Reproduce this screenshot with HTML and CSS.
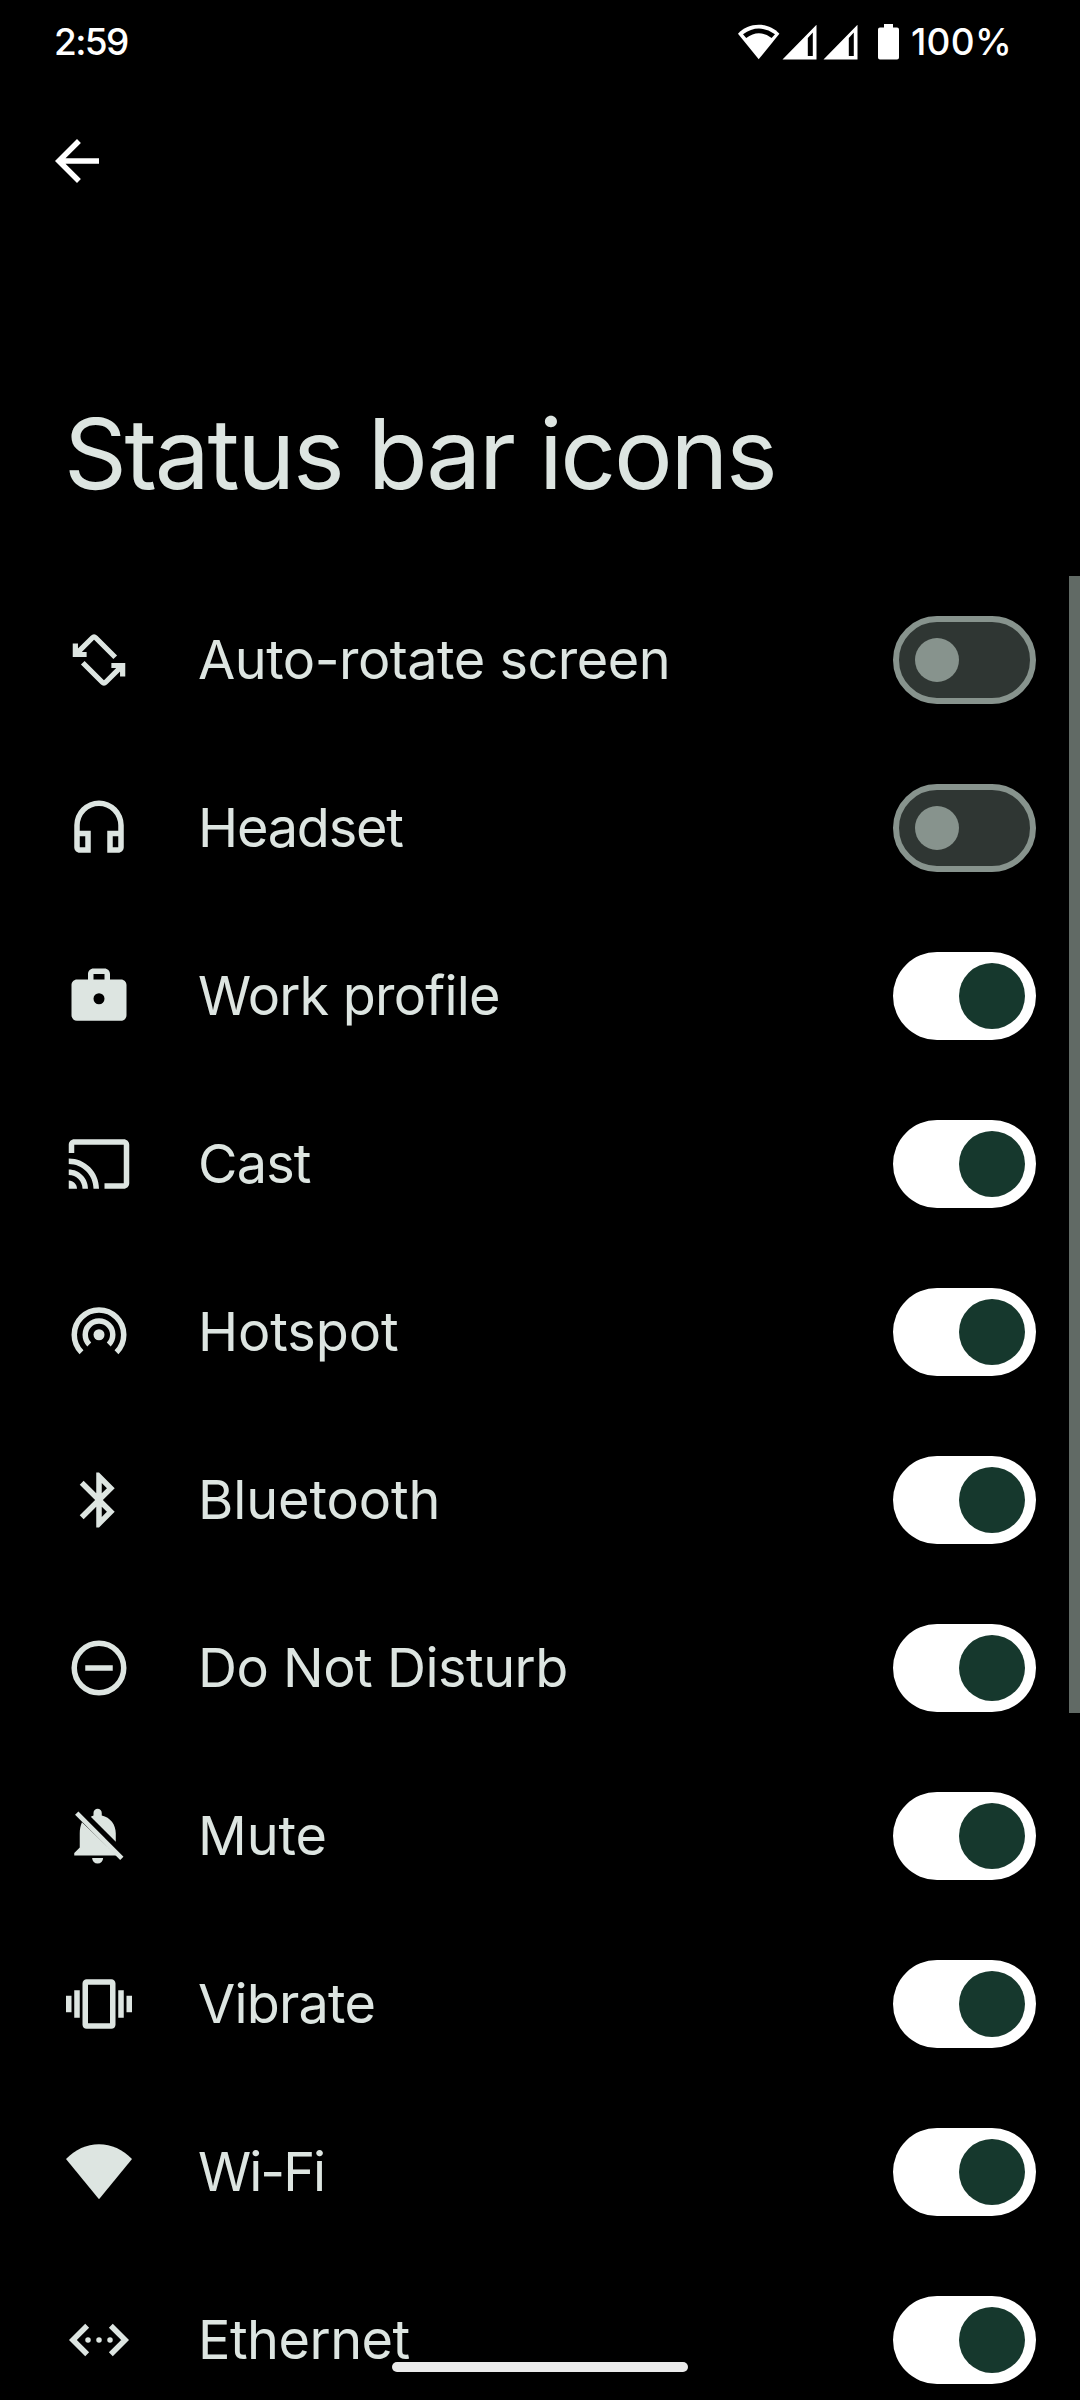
FILE: index.html
```html
<!DOCTYPE html>
<html lang="en">
<head>
    <meta charset="UTF-8">
    <meta name="viewport" content="width=device-width, initial-scale=1.0">
    <title>Status bar icons</title>
    <link rel="stylesheet" href="styles.css">
</head>
<body>
    <div class="status-bar">
        <span class="clock">2:59</span>
        <div class="status-icons">
            <svg class="status-wifi" viewBox="0 0 42 36">
                <path fill="#fff" d="M20.7 35.3L0 9.8C5.5 3.7 12.8.8 20.7.8S36 3.7 41.4 9.8z"/>
                <path fill="#000" d="M5 10.2Q20.9-1 37 10.2L33.6 14Q20.9 4.4 8.2 14z"/>
            </svg>
            <svg class="status-signal" viewBox="0 0 36 36">
                <path fill="#fff" fill-rule="evenodd" d="M.5 35.5h34V.8zM25.8 14l5-5.6v23.7h-5z"/>
            </svg>
            <svg class="status-signal" viewBox="0 0 36 36">
                <path fill="#fff" fill-rule="evenodd" d="M.5 35.5h34V.8zM25.8 14l5-5.6v23.7h-5z"/>
            </svg>
            <svg class="status-battery" viewBox="0 0 22 36">
                <path fill="#fff" d="M6 0h9v3.5h4a2 2 0 0 1 2 2v28a2 2 0 0 1-2 2H2a2 2 0 0 1-2-2v-28a2 2 0 0 1 2-2h4z"/>
            </svg>
            <span class="battery-level">100%</span>
        </div>
    </div>

    <header class="toolbar">
        <svg class="back" viewBox="0 0 24 24"><path d="M20 11H7.83l5.59-5.59L12 4l-8 8 8 8 1.41-1.41L7.83 13H20v-2z"/></svg>
        <h1>Status bar icons</h1>
    </header>

    <ul class="settings">
        <li class="row">
            <svg class="icon line" viewBox="0 0 24 24"><path d="M3.9 9.6l5.7-5.7q.6-.6 1.2 0L17.9 11M3.4 6v4h4.1M20.1 14.4l-5.7 5.7q-.6.6-1.2 0L6.1 13M20.6 18v-4h-4.1"/></svg>
            <span class="label">Auto-rotate screen</span>
            <span class="switch"></span>
        </li>
        <li class="row">
            <svg class="icon" viewBox="0 0 24 24"><path fill-rule="evenodd" d="M12 2a9 9 0 0 0-9 9v8c0 1.1.9 2 2 2h4v-8H5v-2a7 7 0 0 1 14 0v2h-4v8h4c1.1 0 2-.9 2-2v-8a9 9 0 0 0-9-9zM7 15v4H5v-4zM19 15v4h-2v-4z"/></svg>
            <span class="label tighter">Headset</span>
            <span class="switch"></span>
        </li>
        <li class="row">
            <svg class="icon" viewBox="0 0 24 24"><path fill-rule="evenodd" d="M20 6h-4V4c0-1.1-.9-2-2-2h-4c-1.1 0-2 .9-2 2v2H4c-1.1 0-2 .9-2 2v11c0 1.1.9 2 2 2h16c1.1 0 2-.9 2-2V8c0-1.1-.9-2-2-2zM10 4h4v2h-4zM12 15a2 2 0 1 1 0-4 2 2 0 0 1 0 4z"/></svg>
            <span class="label tight">Work profile</span>
            <span class="switch on"></span>
        </li>
        <li class="row">
            <svg class="icon" viewBox="0 0 24 24"><path d="M21 3H3c-1.1 0-2 .9-2 2v3h2V5h18v14h-7v2h7c1.1 0 2-.9 2-2V5c0-1.1-.9-2-2-2zM1 18v3h3c0-1.66-1.34-3-3-3zm0-4v2c2.76 0 5 2.24 5 5h2c0-3.87-3.13-7-7-7zm0-4v2c4.97 0 9 4.03 9 9h2c0-6.08-4.93-11-11-11z"/></svg>
            <span class="label tight">Cast</span>
            <span class="switch on"></span>
        </li>
        <li class="row">
            <svg class="icon" viewBox="0 0 24 24">
                <circle cx="12" cy="13" r="2"/>
                <path class="stroke" d="M8.46 16.54a5 5 0 1 1 7.08 0M5.64 19.36a9 9 0 1 1 12.72 0"/>
            </svg>
            <span class="label wide">Hotspot</span>
            <span class="switch on"></span>
        </li>
        <li class="row">
            <svg class="icon" viewBox="0 0 24 24"><path d="M17.71 7.71L12 2h-1v7.59L6.41 5 5 6.41 10.59 12 5 17.59 6.41 19 11 14.41V22h1l5.71-5.71-4.3-4.29 4.3-4.29zM13 5.83l1.88 1.88L13 9.59V5.83zm1.88 10.46L13 18.17v-3.76l1.88 1.88z"/></svg>
            <span class="label wide">Bluetooth</span>
            <span class="switch on"></span>
        </li>
        <li class="row">
            <svg class="icon" viewBox="0 0 24 24"><path class="stroke" d="M12 3a9 9 0 1 0 0 18 9 9 0 0 0 0-18zM7 12h10"/></svg>
            <span class="label">Do Not Disturb</span>
            <span class="switch on"></span>
        </li>
        <li class="row">
            <svg class="icon" viewBox="0 0 24 24">
                <path d="M9 5l1-.5v-.9a1.5 1.5 0 0 1 3 0v.9c3.1.7 5.1 3.3 5.1 6.5v3.1zM5.8 7C5.3 8.2 5 9.6 5 11v5.2l-2 2v.9h15.4zM9.5 20h4a2 2 0 0 1-4 0z"/>
                <path d="M4.5 3.1L20.9 19.5l-1.2 1.2L3.3 4.3z"/>
            </svg>
            <span class="label wide">Mute</span>
            <span class="switch on"></span>
        </li>
        <li class="row">
            <svg class="icon" viewBox="0 0 24 24"><path fill-rule="evenodd" d="M0 15h2V9H0zM3 17h2V7H3zM22 9v6h2V9zM19 17h2V7h-2zM16.5 3h-9C6.67 3 6 3.67 6 4.5v15c0 .83.67 1.5 1.5 1.5h9c.83 0 1.5-.67 1.5-1.5v-15c0-.83-.67-1.5-1.5-1.5zM16 19H8V5h8z"/></svg>
            <span class="label tight">Vibrate</span>
            <span class="switch on"></span>
        </li>
        <li class="row">
            <svg class="icon" viewBox="0 0 24 24"><path d="M12 21.9L0 7.3C3.3 3.8 7.5 1.9 12 1.9S20.7 3.8 24 7.3z"/></svg>
            <span class="label tightest">Wi-Fi</span>
            <span class="switch on"></span>
        </li>
        <li class="row">
            <svg class="icon" viewBox="0 0 24 24">
                <path class="stroke" d="M7.7 6.8L2.5 12l5.2 5.2M16.3 6.8l5.2 5.2-5.2 5.2"/>
                <circle cx="8" cy="12" r="1"/>
                <circle cx="12" cy="12" r="1"/>
                <circle cx="16" cy="12" r="1"/>
            </svg>
            <span class="label">Ethernet</span>
            <span class="switch on"></span>
        </li>
    </ul>

    <div class="scrollbar"></div>
    <div class="nav-handle"></div>
</body>
</html>
```
FILE: styles.css
```css
:root {
    --text: #dde5e1;
    --outline: #87938d;
    --track-off: #2f3633;
    --thumb-on: #16382d;
}

* {
    margin: 0;
    padding: 0;
    box-sizing: border-box;
}

body {
    position: relative;
    width: 1080px;
    height: 2400px;
    overflow: hidden;
    background: #000;
    color: var(--text);
    font-family: Inter, sans-serif;
}

/* status bar */
.status-bar {
    display: flex;
    justify-content: space-between;
    align-items: center;
    height: 83px;
    padding: 0 68px 0 54px;
    color: #fff;
    font-size: 37px;
    font-weight: 500;
}

.clock {
    letter-spacing: -1.6px;
}

.status-icons {
    display: flex;
    align-items: center;
}

.status-wifi {
    width: 42px;
    height: 36px;
    margin-right: 2px;
}

.status-signal {
    width: 36px;
    height: 36px;
    margin-right: 5px;
}

.status-battery {
    width: 22px;
    height: 36px;
    margin: 0 11px 0 14px;
}

.battery-level {
    letter-spacing: 0.3px;
}

/* header */
.toolbar {
    height: 493px;
    padding-top: 45px;
}

.back {
    display: block;
    width: 66px;
    height: 66px;
    margin-left: 44px;
    fill: #fff;
}

h1 {
    margin: 200px 0 0 64px;
    font-size: 98px;
    font-weight: 400;
    line-height: 120px;
    letter-spacing: -2.3px;
}

/* list */
.settings {
    list-style: none;
}

.row {
    display: flex;
    align-items: center;
    height: 168px;
    padding: 0 44px 0 66px;
}

.icon {
    width: 66px;
    height: 66px;
    margin-right: 66px;
    fill: var(--text);
    overflow: visible;
}

.icon .stroke {
    fill: none;
    stroke: var(--text);
    stroke-width: 2;
}

.icon.line {
    fill: none;
    stroke: var(--text);
    stroke-width: 1.9;
}

.label {
    flex: 1;
    padding-bottom: 2px;
    font-size: 54px;
    letter-spacing: -0.5px;
}

.label.wide {
    letter-spacing: -0.1px;
}

.label.tight {
    letter-spacing: -0.8px;
}

.label.tighter {
    letter-spacing: -1.2px;
}

.label.tightest {
    letter-spacing: -2px;
}

.switch {
    display: flex;
    align-items: center;
    width: 143px;
    height: 88px;
    padding-left: 16px;
    border: 6px solid var(--outline);
    border-radius: 44px;
    background: var(--track-off);
}

.switch::before {
    content: "";
    width: 44px;
    height: 44px;
    border-radius: 50%;
    background: var(--outline);
}

.switch.on {
    justify-content: flex-end;
    padding: 0 11px;
    border: none;
    background: #fff;
}

.switch.on::before {
    width: 66px;
    height: 66px;
    background: var(--thumb-on);
}

/* overlays */
.scrollbar {
    position: absolute;
    top: 576px;
    right: 0;
    width: 11px;
    height: 1137px;
    background: #616a65;
}

.nav-handle {
    position: absolute;
    bottom: 28px;
    left: 392px;
    width: 296px;
    height: 10px;
    border-radius: 5px;
    background: #ebebeb;
}
```
